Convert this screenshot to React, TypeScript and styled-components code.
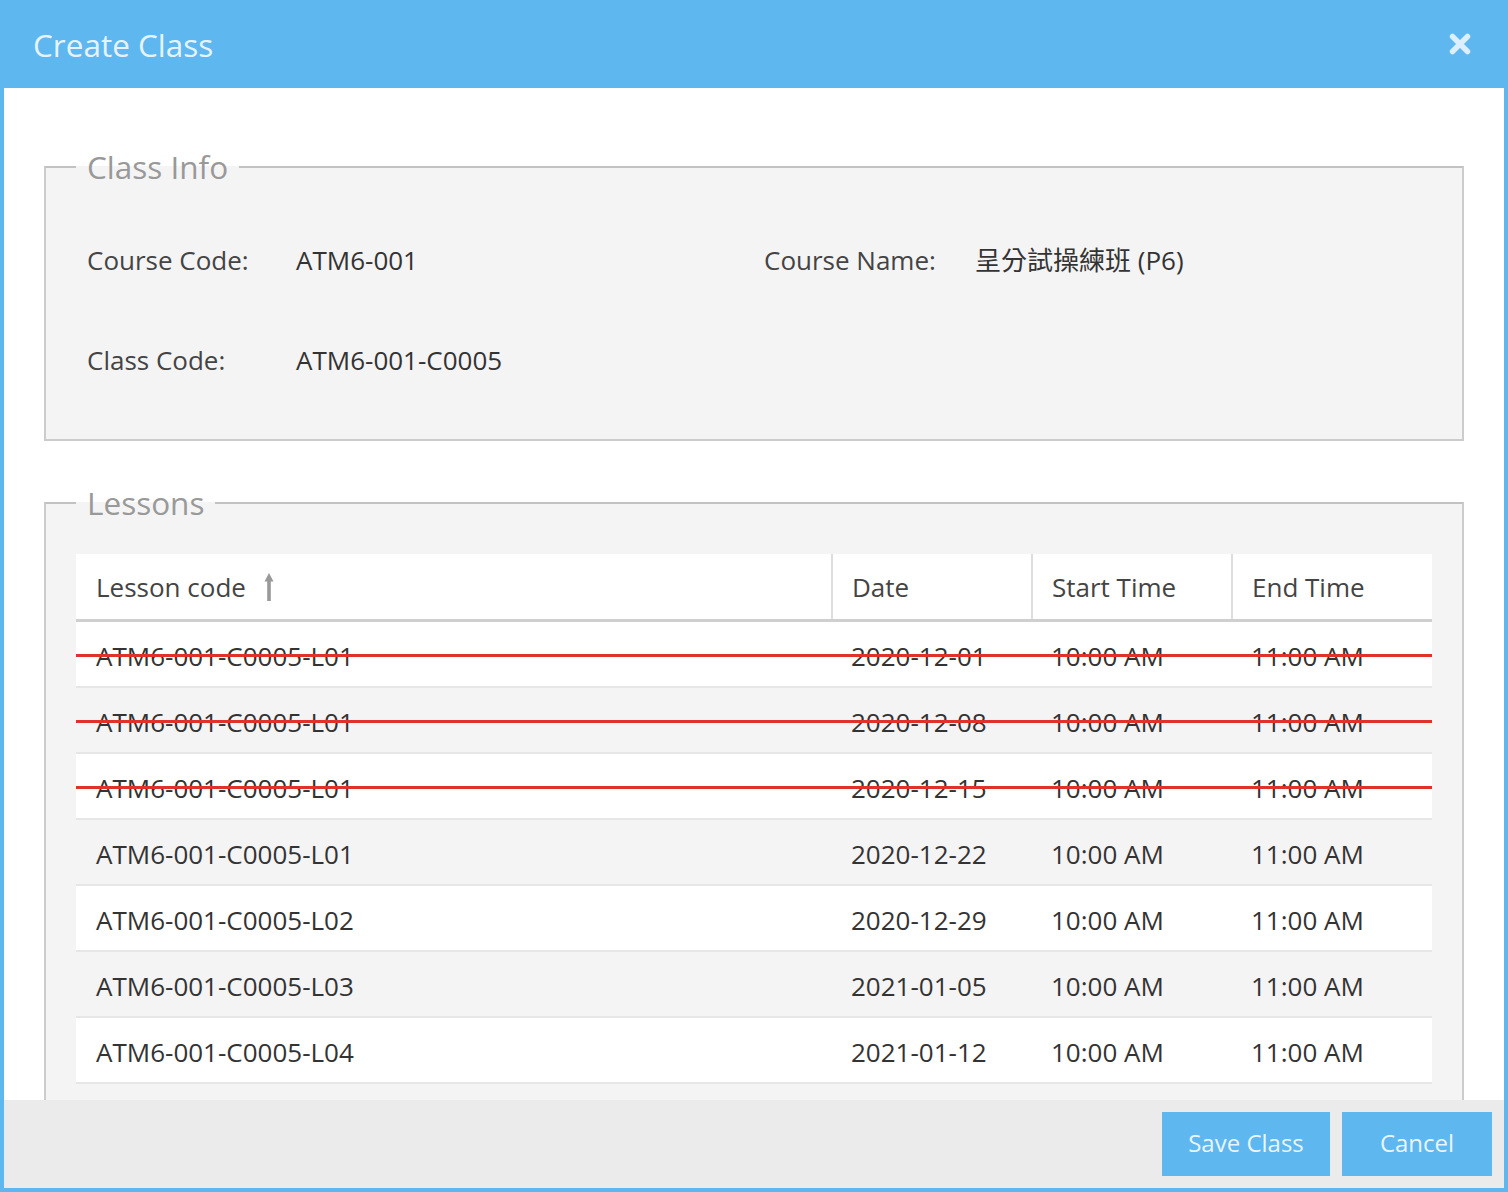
import React from "react";
import styled, { createGlobalStyle } from "styled-components";

const Global = createGlobalStyle`
  html, body { margin: 0; padding: 0; }
  body {
    font-family: "Open Sans", "Noto Sans CJK TC", sans-serif;
    color: #333;
    background: #fff;
  }
  * { box-sizing: border-box; }
`;

const BLUE = "#5fb7ef";

const Modal = styled.div`
  width: 1508px;
  height: 1192px;
  background: ${BLUE};
  padding: 0 4px 4px 4px;
  display: flex;
  flex-direction: column;
  overflow: hidden;
`;

const Header = styled.header`
  height: 88px;
  flex: none;
  display: flex;
  align-items: center;
  justify-content: space-between;
  padding: 0 29px 0 29px;
`;

const Title = styled.h1`
  margin: 0;
  font-weight: 400;
  font-size: 31.5px;
  color: #e6f3fc;
`;

const CloseButton = styled.button`
  border: 0;
  background: transparent;
  padding: 0;
  width: 30px;
  height: 30px;
  display: flex;
  align-items: center;
  justify-content: center;
  cursor: pointer;
`;

const Body = styled.div`
  flex: 1;
  min-height: 0;
  overflow: hidden;
  background: #fff;
  padding: 59px 40px 0 40px;
`;

const Fieldset = styled.fieldset<{ $gapTop?: number }>`
  margin: ${(p) => p.$gapTop ?? 0}px 0 0 0;
  border: 2px solid #cccccc;
  border-top-color: #c2c2c2;
  background: #f4f4f4;
  padding: ${(p) => (p.$gapTop ? "31px 30px 40px" : "55px 30px 61px")};
  min-width: 0;
`;

const Legend = styled.legend`
  font-size: 31.5px;
  line-height: 40px;
  color: #999;
  padding: 0 11px;
  font-weight: 400;
`;

const InfoGrid = styled.div`
  display: grid;
  grid-template-columns: 209px 468px 211px 1fr;
  row-gap: 64px;
  padding-left: 11px;
  font-size: 26px;
  line-height: 36px;
`;

const Label = styled.div`
  color: #444;
`;

const Value = styled.div`
  color: #333;
`;

const Table = styled.div`
  background: #fff;
`;

const COLS = "755px 200px 200px 1fr";

const HeadRow = styled.div`
  display: grid;
  grid-template-columns: ${COLS};
  height: 68px;
  border-bottom: 3px solid #cfcfcf;
  background: #fff;
`;

const HeadCell = styled.div<{ $first?: boolean }>`
  display: flex;
  align-items: center;
  gap: 18px;
  font-size: 26px;
  color: #444;
  border-left: ${(p) => (p.$first ? "0" : "2px solid #dedede")};
  padding-left: ${(p) => (p.$first ? "20px" : "19px")};
`;

const Row = styled.div<{ $alt: boolean }>`
  position: relative;
  display: grid;
  grid-template-columns: ${COLS};
  height: 66px;
  border-bottom: 2px solid #e6e6e6;
  background: ${(p) => (p.$alt ? "#f4f4f4" : "#fff")};
`;

const Cell = styled.div`
  display: flex;
  align-items: center;
  padding: 4px 0 0 20px;
  font-size: 26px;
  color: #333;
`;

const Strike = styled.div`
  position: absolute;
  left: 0;
  right: 0;
  top: 32px;
  height: 3px;
  background: #e0322a;
`;

const Footer = styled.footer`
  height: 88px;
  flex: none;
  background: #ebebeb;
  display: flex;
  justify-content: flex-end;
  align-items: flex-start;
  gap: 12px;
  padding: 12px 12px 0 0;
`;

const Button = styled.button<{ $w: number }>`
  width: ${(p) => p.$w}px;
  height: 64px;
  border: 0;
  padding: 0 0 3px 0;
  background: ${BLUE};
  color: #e8f5fd;
  font-family: "Open Sans", sans-serif;
  font-size: 24px;
  cursor: pointer;
`;

const SortArrow = () => (
  <svg width="10" height="30" viewBox="0 0 10 30" aria-hidden="true">
    <polygon points="5,1 9.5,9.5 6.8,9.5 6.8,29 3.2,29 3.2,9.5 0.5,9.5" fill="#999999" />
  </svg>
);

const CloseIcon = () => (
  <svg width="24" height="24" viewBox="0 0 24 24" aria-hidden="true">
    <path d="M4.5 4.5 L19.5 19.5 M19.5 4.5 L4.5 19.5" stroke="#dcefff" strokeWidth="5.5" strokeLinecap="round" />
  </svg>
);

type Lesson = { code: string; date: string; deleted?: boolean };

const lessons: Lesson[] = [
  { code: "ATM6-001-C0005-L01", date: "2020-12-01", deleted: true },
  { code: "ATM6-001-C0005-L01", date: "2020-12-08", deleted: true },
  { code: "ATM6-001-C0005-L01", date: "2020-12-15", deleted: true },
  { code: "ATM6-001-C0005-L01", date: "2020-12-22" },
  { code: "ATM6-001-C0005-L02", date: "2020-12-29" },
  { code: "ATM6-001-C0005-L03", date: "2021-01-05" },
  { code: "ATM6-001-C0005-L04", date: "2021-01-12" },
];

export default function App() {
  return (
    <>
      <Global />
      <Modal>
        <Header>
          <Title>Create Class</Title>
          <CloseButton aria-label="Close">
            <CloseIcon />
          </CloseButton>
        </Header>
        <Body>
          <Fieldset>
            <Legend>Class Info</Legend>
            <InfoGrid>
              <Label>Course Code:</Label>
              <Value>ATM6-001</Value>
              <Label>Course Name:</Label>
              <Value>呈分試操練班 (P6)</Value>
              <Label>Class Code:</Label>
              <Value>ATM6-001-C0005</Value>
            </InfoGrid>
          </Fieldset>
          <Fieldset $gapTop={42}>
            <Legend>Lessons</Legend>
            <Table>
              <HeadRow>
                <HeadCell $first>
                  Lesson code <SortArrow />
                </HeadCell>
                <HeadCell>Date</HeadCell>
                <HeadCell>Start Time</HeadCell>
                <HeadCell>End Time</HeadCell>
              </HeadRow>
              {lessons.map((l, i) => (
                <Row key={i} $alt={i % 2 === 1}>
                  <Cell>{l.code}</Cell>
                  <Cell>{l.date}</Cell>
                  <Cell>10:00 AM</Cell>
                  <Cell>11:00 AM</Cell>
                  {l.deleted && <Strike />}
                </Row>
              ))}
            </Table>
          </Fieldset>
        </Body>
        <Footer>
          <Button $w={168}>Save Class</Button>
          <Button $w={150}>Cancel</Button>
        </Footer>
      </Modal>
    </>
  );
}
